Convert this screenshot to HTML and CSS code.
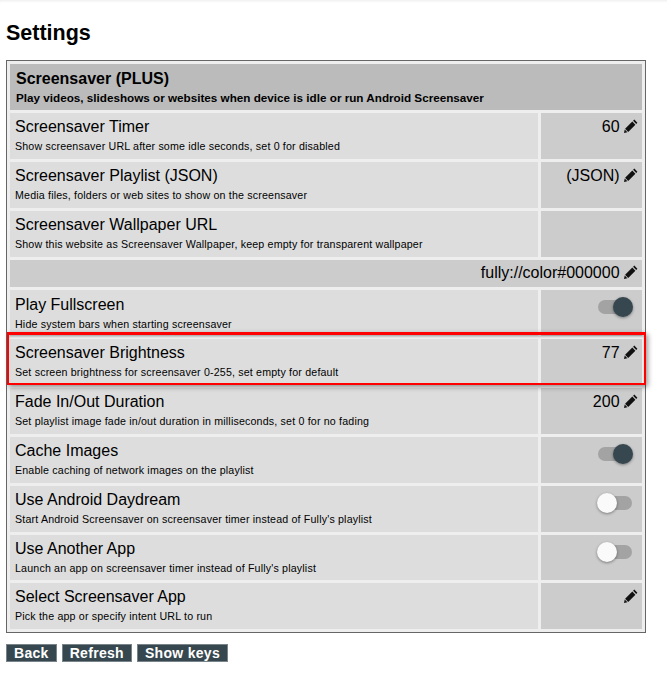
FILE: index.html
```html
<!DOCTYPE html>
<html lang="en">

<head>
    <meta charset="UTF-8">
    <meta name="viewport" content="width=device-width, initial-scale=1.0">
    <title>Settings</title>
    <link rel="stylesheet" href="styles.css">
</head>

<body>
    <svg class="icon-defs" width="0" height="0" aria-hidden="true">
        <symbol id="pencil" viewBox="0 0 14 14">
            <path d="M10.3 0.6 13.4 3.7 12.2 4.9 9.1 1.8ZM8.3 2.6 11.4 5.7 4.2 12.9 1.1 9.8ZM0.7 10.6 3.4 13.3 0 14Z" />
        </symbol>
    </svg>

    <h1 class="page-title">Settings</h1>

    <div class="settings">
        <div class="section">
            <div class="section-title">Screensaver (PLUS)</div>
            <div class="section-desc">Play videos, slideshows or websites when device is idle or run Android Screensaver</div>
        </div>

        <div class="row">
            <div class="label">
                <div class="name">Screensaver Timer</div>
                <div class="desc">Show screensaver URL after some idle seconds, set 0 for disabled</div>
            </div>
            <div class="value">60 <svg class="pencil"><use href="#pencil"></use></svg></div>
        </div>

        <div class="row">
            <div class="label">
                <div class="name">Screensaver Playlist (JSON)</div>
                <div class="desc">Media files, folders or web sites to show on the screensaver</div>
            </div>
            <div class="value">(JSON) <svg class="pencil"><use href="#pencil"></use></svg></div>
        </div>

        <div class="row">
            <div class="label">
                <div class="name">Screensaver Wallpaper URL</div>
                <div class="desc">Show this website as Screensaver Wallpaper, keep empty for transparent wallpaper</div>
            </div>
            <div class="value"></div>
        </div>

        <div class="value wide">fully://color#000000 <svg class="pencil"><use href="#pencil"></use></svg></div>

        <div class="row low">
            <div class="label">
                <div class="name">Play Fullscreen</div>
                <div class="desc">Hide system bars when starting screensaver</div>
            </div>
            <div class="value"><span class="toggle on"></span></div>
        </div>

        <div class="row highlight">
            <div class="label">
                <div class="name">Screensaver Brightness</div>
                <div class="desc">Set screen brightness for screensaver 0-255, set empty for default</div>
            </div>
            <div class="value">77 <svg class="pencil"><use href="#pencil"></use></svg></div>
        </div>

        <div class="row">
            <div class="label">
                <div class="name">Fade In/Out Duration</div>
                <div class="desc">Set playlist image fade in/out duration in milliseconds, set 0 for no fading</div>
            </div>
            <div class="value">200 <svg class="pencil"><use href="#pencil"></use></svg></div>
        </div>

        <div class="row">
            <div class="label">
                <div class="name">Cache Images</div>
                <div class="desc">Enable caching of network images on the playlist</div>
            </div>
            <div class="value"><span class="toggle on"></span></div>
        </div>

        <div class="row">
            <div class="label">
                <div class="name">Use Android Daydream</div>
                <div class="desc">Start Android Screensaver on screensaver timer instead of Fully's playlist</div>
            </div>
            <div class="value"><span class="toggle"></span></div>
        </div>

        <div class="row short">
            <div class="label">
                <div class="name">Use Another App</div>
                <div class="desc">Launch an app on screensaver timer instead of Fully's playlist</div>
            </div>
            <div class="value"><span class="toggle"></span></div>
        </div>

        <div class="row">
            <div class="label">
                <div class="name">Select Screensaver App</div>
                <div class="desc">Pick the app or specify intent URL to run</div>
            </div>
            <div class="value"><svg class="pencil"><use href="#pencil"></use></svg></div>
        </div>
    </div>

    <div class="buttons">
        <a href="#" class="btn">Back</a>
        <a href="#" class="btn">Refresh</a>
        <a href="#" class="btn">Show keys</a>
    </div>
</body>

</html>
```

FILE: styles.css
```css
* {
    box-sizing: border-box;
}

html {
    background-color: #fff;
}

body {
    margin: 0;
    padding: 0 6px;
    min-height: 100vh;
    color: #000;
    font-family: "Liberation Sans", Arial, sans-serif;
    box-shadow: inset 0 3px 3px -2px rgba(0, 0, 0, 0.08);
    overflow: hidden;
}

.icon-defs {
    position: absolute;
}

.page-title {
    margin: 0;
    padding-top: 21px;
    height: 60px;
    font-size: 21.5px;
    line-height: 25px;
    font-weight: 700;
}

.settings {
    display: flex;
    flex-direction: column;
    gap: 3px;
    width: 640px;
    padding: 3px;
    border: 1px solid #666;
    background-color: #eee;
}

.section {
    height: 46px;
    padding: 5px 6px 0;
    background-color: #bbb;
}

.section-title {
    font-size: 16px;
    line-height: 19px;
    font-weight: 700;
}

.section-desc {
    margin-top: 3px;
    font-size: 11.7px;
    line-height: 14px;
    font-weight: 700;
}

.row {
    display: grid;
    grid-template-columns: 1fr 101px;
    gap: 3px;
    height: 46px;
}

.row.short {
    height: 45px;
}

.label {
    padding: 5px 5px 0;
    background-color: #ddd;
}

.row.low .label {
    padding-top: 6px;
}

.name {
    font-size: 16px;
    line-height: 18px;
}

.desc {
    margin-top: 4px;
    font-size: 10.67px;
    line-height: 13px;
    letter-spacing: 0.17px;
    white-space: nowrap;
}

.value {
    padding: 5px 4px 0 0;
    background-color: #ccc;
    text-align: right;
    font-size: 16px;
    line-height: 18px;
}

.value.wide {
    height: 27px;
    padding-top: 4px;
}

.pencil {
    display: inline-block;
    width: 14px;
    height: 14px;
    vertical-align: -1px;
    fill: #111;
}

.highlight {
    position: relative;
}

.highlight::after {
    content: "";
    position: absolute;
    top: -7px;
    right: -4px;
    bottom: 0;
    left: -3px;
    border: solid #f00;
    border-width: 3px 2px 2px;
    box-shadow: 2px 2px 5px rgba(0, 0, 0, 0.4), inset 0 2px 2px rgba(0, 0, 0, 0.2);
    pointer-events: none;
}

.toggle {
    position: relative;
    display: inline-block;
    width: 34px;
    height: 14px;
    margin: 5px 6px 0 0;
    border-radius: 7px;
    background-color: #a3a3a3;
}

.toggle::after {
    content: "";
    position: absolute;
    top: -3px;
    left: -1px;
    width: 20px;
    height: 20px;
    border-radius: 50%;
    background-color: #fafafa;
    box-shadow: 0 1px 3px rgba(0, 0, 0, 0.4);
}

.toggle.on::after {
    left: 15px;
    background-color: #37474f;
}

.buttons {
    display: flex;
    gap: 5px;
    margin-top: 11px;
}

.btn {
    display: block;
    height: 18px;
    padding: 0 7px;
    border: 1px solid #78848a;
    background-color: #37474f;
    color: #fff;
    font-size: 14px;
    line-height: 16px;
    font-weight: 700;
    letter-spacing: 0.3px;
    text-decoration: none;
}
```
